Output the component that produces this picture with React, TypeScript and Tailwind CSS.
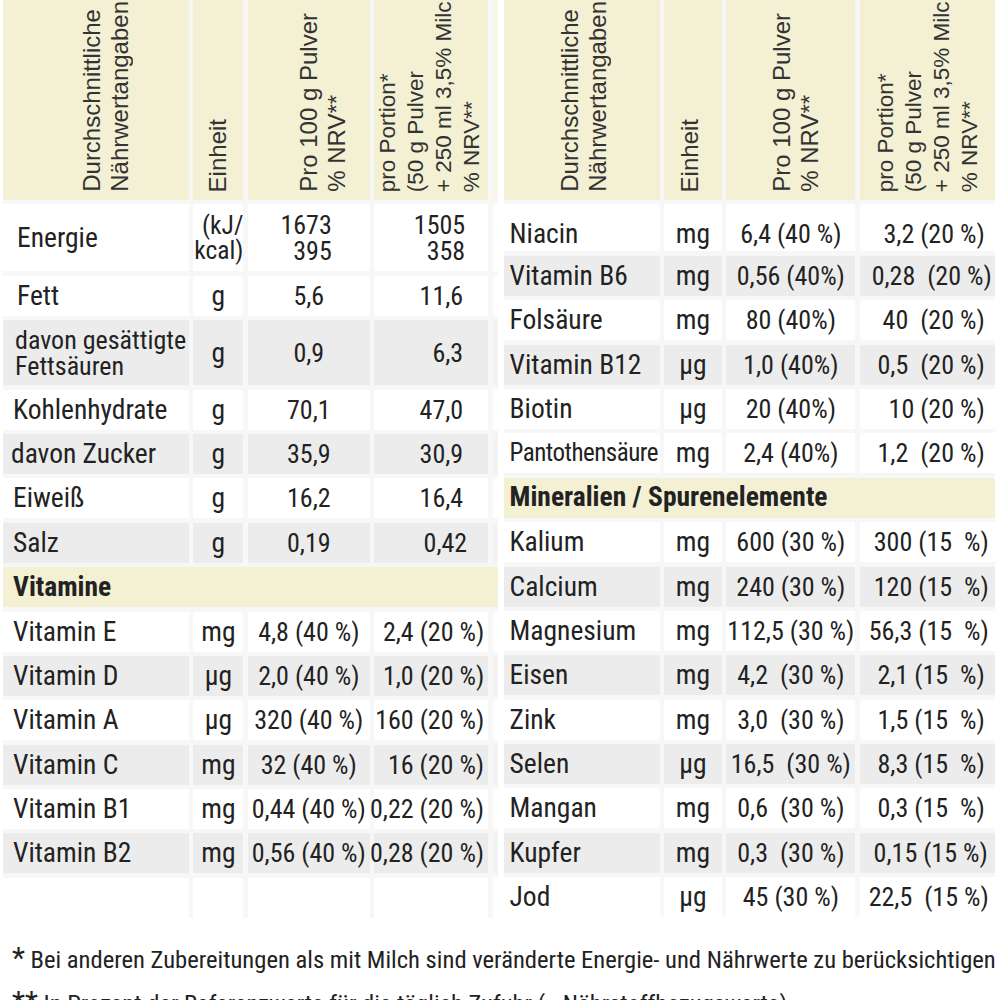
import React from 'react';

type Bg = 'w' | 'g' | 'y';

const bgClass: Record<Bg, string> = {
  w: 'bg-white',
  g: 'bg-[#ececec]',
  y: 'bg-[#f3f0d4]',
};

type Row = {
  label: string;
  unit?: string;
  a?: string;
  b?: string;
  bg: Bg;
  h?: string;
  section?: boolean;
  pl?: string; // label padding override
  lc?: string; // label font override
  ac?: string; // value a alignment override
  bc?: string; // value b alignment override
  rc?: string; // whole row tweak
};

const macro = 'justify-end pr-[25px]';

const leftRows: Row[] = [
  {
    label: 'Energie',
    unit: '(kJ/\nkcal)',
    a: '1673\n395',
    b: '1505\n358',
    bg: 'w',
    h: 'h-[67px]',
    pl: 'pl-[14px]',
    ac: 'justify-end text-right pr-[38px]',
    bc: 'justify-end text-right pr-[23px]',
  },
  { label: 'Fett', unit: 'g', a: '5,6', b: '11,6', bg: 'w', pl: 'pl-[14px]', bc: macro },
  {
    label: 'davon gesättigte\nFettsäuren',
    unit: 'g',
    a: '0,9',
    b: '6,3',
    bg: 'g',
    h: 'h-[65px]',
    pl: 'pl-[12px]',
    lc: 'text-[26px]',
    bc: macro,
  },
  { label: 'Kohlenhydrate', unit: 'g', a: '70,1', b: '47,0', bg: 'w', bc: macro },
  { label: 'davon Zucker', unit: 'g', a: '35,9', b: '30,9', bg: 'g', pl: 'pl-[8px]', bc: macro },
  { label: 'Eiweiß', unit: 'g', a: '16,2', b: '16,4', bg: 'w', bc: macro },
  { label: 'Salz', unit: 'g', a: '0,19', b: '0,42', bg: 'g', bc: 'justify-end pr-[21px]' },
  { label: 'Vitamine', bg: 'y', section: true },
  { label: 'Vitamin E', unit: 'mg', a: '4,8 (40 %)', b: '2,4 (20 %)', bg: 'w' },
  { label: 'Vitamin D', unit: 'µg', a: '2,0 (40 %)', b: '1,0 (20 %)', bg: 'g' },
  { label: 'Vitamin A', unit: 'µg', a: '320 (40 %)', b: '160 (20 %)', bg: 'w' },
  { label: 'Vitamin C', unit: 'mg', a: '32 (40 %)', b: '16 (20 %)', bg: 'g' },
  { label: 'Vitamin B1', unit: 'mg', a: '0,44 (40 %)', b: '0,22 (20 %)', bg: 'w' },
  { label: 'Vitamin B2', unit: 'mg', a: '0,56 (40 %)', b: '0,28 (20 %)', bg: 'g' },
  { label: '', unit: '', a: '', b: '', bg: 'w' },
];

const rightRows: Row[] = [
  { label: 'Niacin', unit: 'mg', a: '6,4 (40 %)', b: '3,2 (20 %)', bg: 'w', h: 'h-[47px]', rc: 'pt-[12px]' },
  { label: 'Vitamin B6', unit: 'mg', a: '0,56 (40%)', b: '0,28  (20 %)', bg: 'g', bc: 'justify-end pr-[3px]' },
  { label: 'Folsäure', unit: 'mg', a: '80 (40%)', b: '40  (20 %)', bg: 'w' },
  { label: 'Vitamin B12', unit: 'µg', a: '1,0 (40%)', b: '0,5  (20 %)', bg: 'g' },
  { label: 'Biotin', unit: 'µg', a: '20 (40%)', b: '10 (20 %)', bg: 'w' },
  {
    label: 'Pantothensäure',
    unit: 'mg',
    a: '2,4 (40%)',
    b: '1,2  (20 %)',
    bg: 'w',
    lc: 'text-[25px] tracking-[-0.5px]',
  },
  { label: 'Mineralien / Spurenelemente', bg: 'y', section: true },
  { label: 'Kalium', unit: 'mg', a: '600 (30 %)', b: '300 (15  %)', bg: 'w', bc: 'justify-end pr-[6px]' },
  { label: 'Calcium', unit: 'mg', a: '240 (30 %)', b: '120 (15  %)', bg: 'g', bc: 'justify-end pr-[6px]' },
  { label: 'Magnesium', unit: 'mg', a: '112,5 (30 %)', b: '56,3 (15  %)', bg: 'w', bc: 'justify-end pr-[6px]' },
  { label: 'Eisen', unit: 'mg', a: '4,2  (30 %)', b: '2,1 (15  %)', bg: 'g' },
  { label: 'Zink', unit: 'mg', a: '3,0  (30 %)', b: '1,5 (15  %)', bg: 'w' },
  { label: 'Selen', unit: 'µg', a: '16,5  (30 %)', b: '8,3 (15  %)', bg: 'g' },
  { label: 'Mangan', unit: 'mg', a: '0,6  (30 %)', b: '0,3 (15  %)', bg: 'w' },
  { label: 'Kupfer', unit: 'mg', a: '0,3  (30 %)', b: '0,15 (15 %)', bg: 'g', bc: 'justify-end pr-[7px]' },
  { label: 'Jod', unit: 'µg', a: '45 (30 %)', b: '22,5  (15 %)', bg: 'w', bc: 'justify-end pr-[6px]' },
];

const font = "font-['Roboto_Condensed','Roboto',sans-serif] [font-stretch:75%] text-[#222]";

const Head = ({ text, pad, size = 'text-[24px]' }: { text: string; pad: string; size?: string }) => (
  <div className={`bg-[#f3f0d4] h-[200px] overflow-hidden flex items-end pb-[8px] ${pad}`}>
    <div
      className={`[writing-mode:vertical-rl] rotate-180 whitespace-pre font-['Liberation_Sans',Arial,sans-serif] ${size} leading-[28px] text-[#333]`}
    >
      {text}
    </div>
  </div>
);

const Table = ({
  rows,
  cols,
  pads,
  labelPad,
  bAlign,
  extra,
}: {
  rows: Row[];
  cols: string;
  pads: string[];
  labelPad: string;
  bAlign: string;
  extra?: boolean;
}) => (
  <div className={`grid ${cols} gap-[4.4px] bg-[#f7f7f7] ${font}`}>
    <Head text={'Durchschnittliche\nNährwertangaben'} pad={pads[0]} />
    <Head text="Einheit" pad={pads[1]} />
    <Head text={'Pro 100 g Pulver\n% NRV**'} pad={pads[2]} />
    <Head text={'pro Portion*\n(50 g Pulver\n+ 250 ml 3,5% Milch\n% NRV**'} pad={pads[3]} size="text-[22.5px]" />
    {extra && <div className="bg-[#f8f6e6] h-[200px]" />}
    {rows.map((r, i) =>
      r.section ? (
        <div
          key={i}
          className={`${extra ? 'col-span-5' : 'col-span-4'} ${bgClass[r.bg]} h-[40px] flex items-center ${labelPad} pb-[2px] font-bold text-[27.5px]`}
        >
          {r.label}
        </div>
      ) : (
        <React.Fragment key={i}>
          <div
            className={`${bgClass[r.bg]} ${r.h ?? 'h-[40px]'} ${r.rc ?? ''} flex items-center ${r.pl ?? labelPad} whitespace-pre leading-[26px] ${r.lc ?? 'text-[27.5px]'}`}
          >
            {r.label}
          </div>
          <div
            className={`${bgClass[r.bg]} ${r.rc ?? ''} flex items-center whitespace-pre ${
              r.unit && r.unit.includes('\n')
                ? 'justify-end text-right leading-[25px] text-[25.5px]'
                : 'justify-center leading-[26px] text-[27.5px]'
            }`}
          >
            {r.unit}
          </div>
          <div
            className={`${bgClass[r.bg]} ${r.rc ?? ''} flex items-center whitespace-pre leading-[26px] text-[26px] ${r.ac ?? 'justify-center'}`}
          >
            {r.a}
          </div>
          <div
            className={`${bgClass[r.bg]} ${r.rc ?? ''} flex items-center whitespace-pre leading-[26px] text-[26px] ${r.bc ?? bAlign}`}
          >
            {r.b}
          </div>
          {extra && <div className={r.bg === 'g' ? 'bg-[#f3f3f3]' : 'bg-white'} />}
        </React.Fragment>
      ),
    )}
  </div>
);

export default function App() {
  return (
    <div className="w-[1000px] h-[1000px] overflow-hidden bg-white">
      <div className="flex items-start pl-[3px] gap-[6px]">
        <Table
          rows={leftRows}
          cols="grid-cols-[186px_50px_122px_114px_5px]"
          pads={['pl-[75px]', 'pl-[11px]', 'pl-[47px]', 'pl-0']}
          labelPad="pl-[10px]"
          bAlign="justify-end pr-[4px]"
          extra
        />
        <Table
          rows={rightRows}
          cols="grid-cols-[156px_58px_129px_135px]"
          pads={['pl-[52px]', 'pl-[12px]', 'pl-[42px]', 'pl-[12px]']}
          labelPad="pl-[6px]"
          bAlign="justify-end pr-[10px]"
        />
      </div>
      <div className={`${font} text-[24.6px] pl-[12px] mt-[19px] whitespace-nowrap leading-[42px]`}>
        <p>
          <span className="text-[30px]">*</span> Bei anderen Zubereitungen als mit Milch sind veränderte Energie- und
          Nährwerte zu berücksichtigen
        </p>
        <p>
          <span className="text-[30px]">**</span> In Prozent der Referenzwerte für die täglich Zufuhr (=
          Nährstoffbezugswerte)
        </p>
      </div>
    </div>
  );
}
